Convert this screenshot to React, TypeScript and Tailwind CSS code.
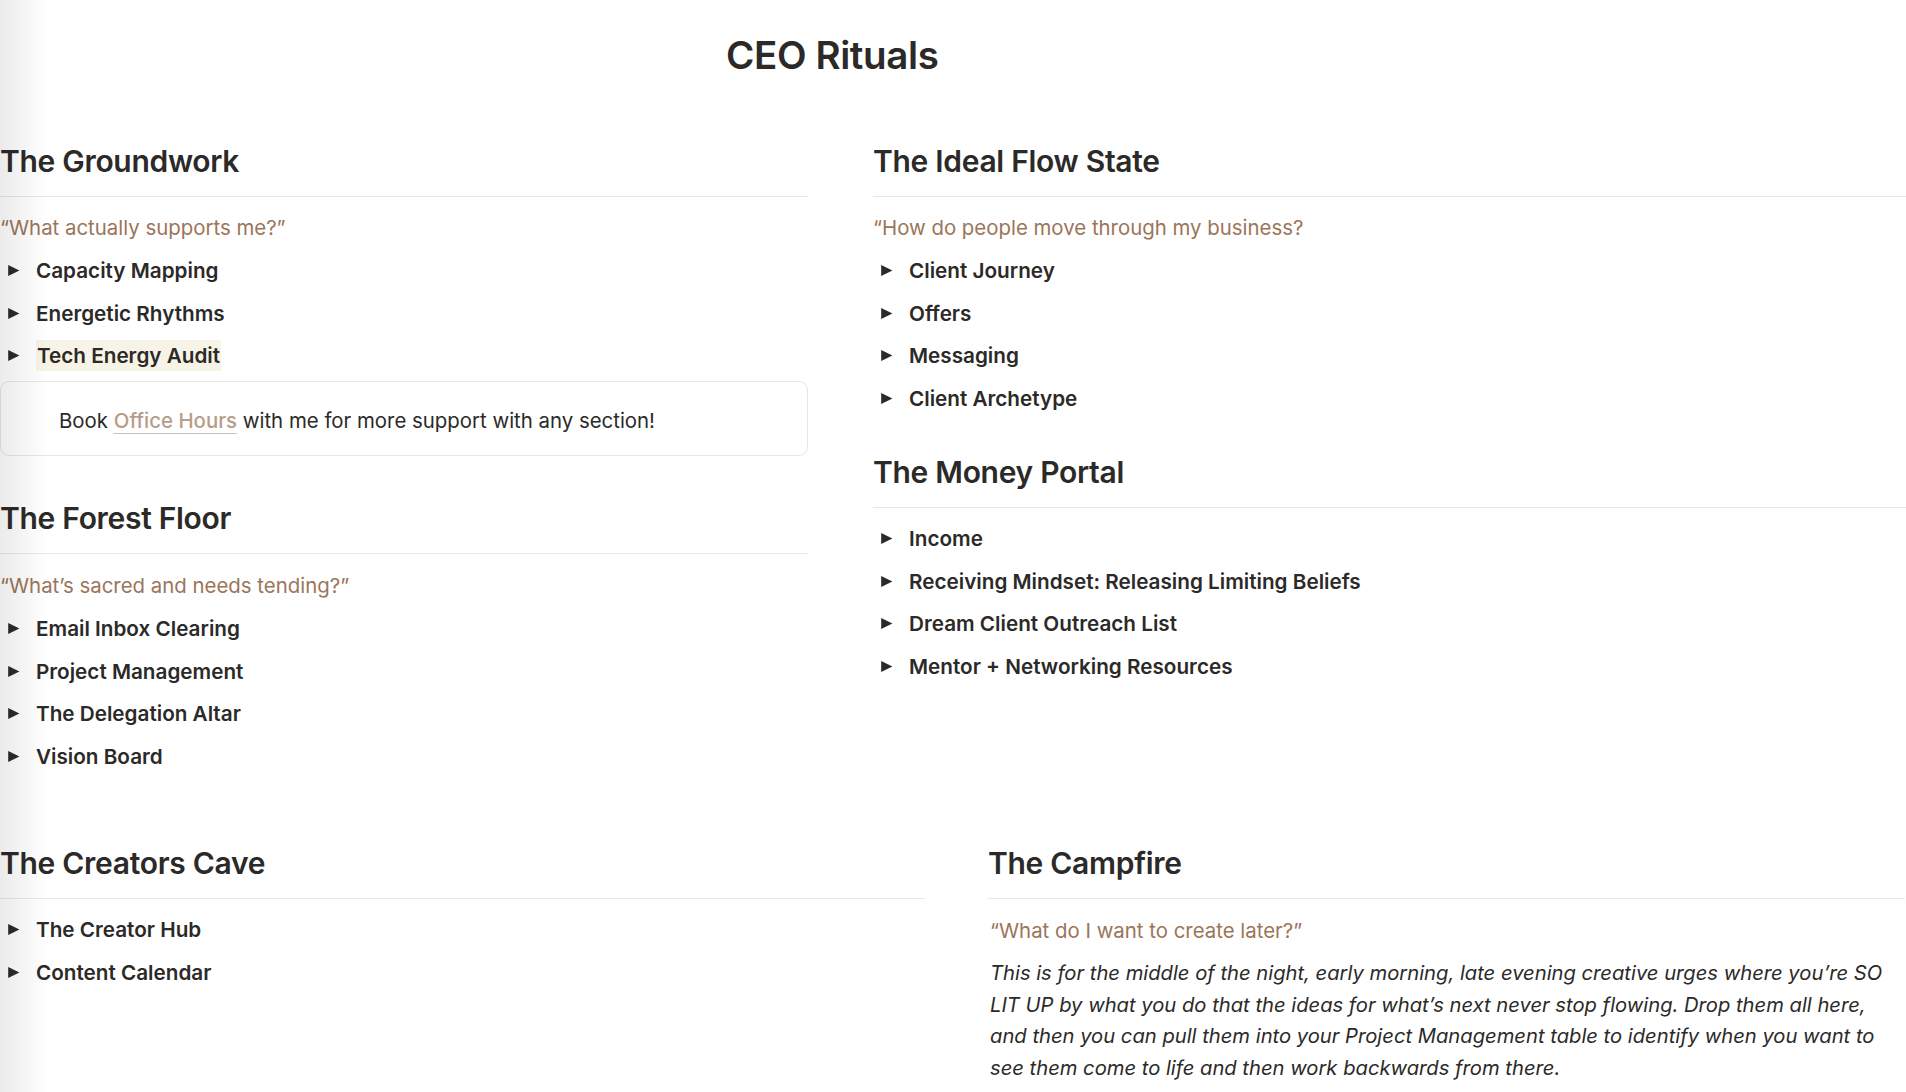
import React from "react";

type Section = {
  title: string;
  quote?: string;
  items: string[];
};

const groundwork: Section = {
  title: "The Groundwork",
  quote: "\u201CWhat actually supports me?\u201D",
  items: ["Capacity Mapping", "Energetic Rhythms", "Tech Energy Audit"],
};

const forestFloor: Section = {
  title: "The Forest Floor",
  quote: "\u201CWhat\u2019s sacred and needs tending?\u201D",
  items: ["Email Inbox Clearing", "Project Management", "The Delegation Altar", "Vision Board"],
};

const flowState: Section = {
  title: "The Ideal Flow State",
  quote: "\u201CHow do people move through my business?",
  items: ["Client Journey", "Offers", "Messaging", "Client Archetype"],
};

const moneyPortal: Section = {
  title: "The Money Portal",
  items: [
    "Income",
    "Receiving Mindset: Releasing Limiting Beliefs",
    "Dream Client Outreach List",
    "Mentor + Networking Resources",
  ],
};

const creatorsCave: Section = {
  title: "The Creators Cave",
  items: ["The Creator Hub", "Content Calendar"],
};

function Triangle() {
  return (
    <svg width="13" height="13" viewBox="0 0 13 13" className="shrink-0 text-[#2b2a28]">
      <path d="M1.2 0.9 L12.4 6.5 L1.2 12.1 Z" fill="currentColor" />
    </svg>
  );
}

function Heading({ children }: { children: React.ReactNode }) {
  return (
    <div className="border-b border-[#e8e8e6] pb-[17px]">
      <h2 className="text-[30px] leading-[36px] font-semibold tracking-[-0.01em] text-[#2b2a28]">
        {children}
      </h2>
    </div>
  );
}

function Quote({ children }: { children: React.ReactNode }) {
  return (
    <div className="flex h-[42.5px] items-center text-[20.4px] text-[#9b7559]">{children}</div>
  );
}

function Toggle({ label, highlight }: { label: string; highlight?: boolean }) {
  return (
    <div className="flex h-[42.5px] items-center pl-[7px]">
      <Triangle />
      <span
        className={
          highlight
            ? "ml-[16px] bg-[#f8f3e7] px-[1px] text-[20.7px] font-semibold text-[#2b2a28]"
            : "ml-[16px] text-[20.7px] font-semibold text-[#2b2a28]"
        }
      >
        {label}
      </span>
    </div>
  );
}

function SectionBlock({
  section,
  highlightLast,
  loose,
}: {
  section: Section;
  highlightLast?: boolean;
  loose?: boolean;
}) {
  return (
    <div>
      <Heading>{section.title}</Heading>
      <div className={loose ? "pt-[11px]" : "pt-[10px]"}>
        {section.quote ? <Quote>{section.quote}</Quote> : null}
        {section.items.map((item, i) => (
          <Toggle
            key={item}
            label={item}
            highlight={highlightLast && i === section.items.length - 1}
          />
        ))}
      </div>
    </div>
  );
}

export default function App() {
  return (
    <div className="relative min-h-screen overflow-hidden bg-white font-['Inter','Noto_Sans',sans-serif]">
      <div className="pointer-events-none absolute top-0 left-0 h-full w-[48px] bg-linear-to-r from-black/[0.08] to-transparent" />

      <h1 className="pt-[33px] pl-[726px] text-[38.5px] leading-[44px] font-semibold tracking-[-0.01em] text-[#2b2a28]">
        CEO Rituals
      </h1>

      <div className="mt-[66px] grid grid-cols-[808px_1033px] gap-x-[65px]">
        <div>
          <SectionBlock section={groundwork} highlightLast />
          <div className="mt-[4px] flex h-[75px] items-center rounded-[9px] border border-[#e6e6e4] pt-[5px] pl-[58px] text-[20.4px] text-[#2b2a28]">
            <span>
              Book{" "}
              <span className="font-medium text-[#b69d89] underline decoration-[#cbc2ba] decoration-1 underline-offset-[5px]">
                Office Hours
              </span>{" "}
              with me for more support with any section!
            </span>
          </div>
          <div className="mt-[44px]">
            <SectionBlock section={forestFloor} loose />
          </div>
        </div>

        <div>
          <SectionBlock section={flowState} />
          <div className="mt-[34px]">
            <SectionBlock section={moneyPortal} />
          </div>
        </div>
      </div>

      <div className="mt-[67px] grid grid-cols-[925px_917px] gap-x-[63px]">
        <SectionBlock section={creatorsCave} />
        <div>
          <Heading>The Campfire</Heading>
          <div className="pt-[12px] pl-[2px]">
            <Quote>{"\u201CWhat do I want to create later?\u201D"}</Quote>
            <p className="pt-[4px] pr-[6px] text-[20.2px] leading-[31.7px] text-[#2b2a28] italic">
              This is for the middle of the night, early morning, late evening creative urges where
              you&rsquo;re SO LIT UP by what you do that the ideas for what&rsquo;s next never stop
              flowing. Drop them all here, and then you can pull them into your Project Management
              table to identify when you want to see them come to life and then work backwards from
              there.
            </p>
          </div>
        </div>
      </div>
    </div>
  );
}
